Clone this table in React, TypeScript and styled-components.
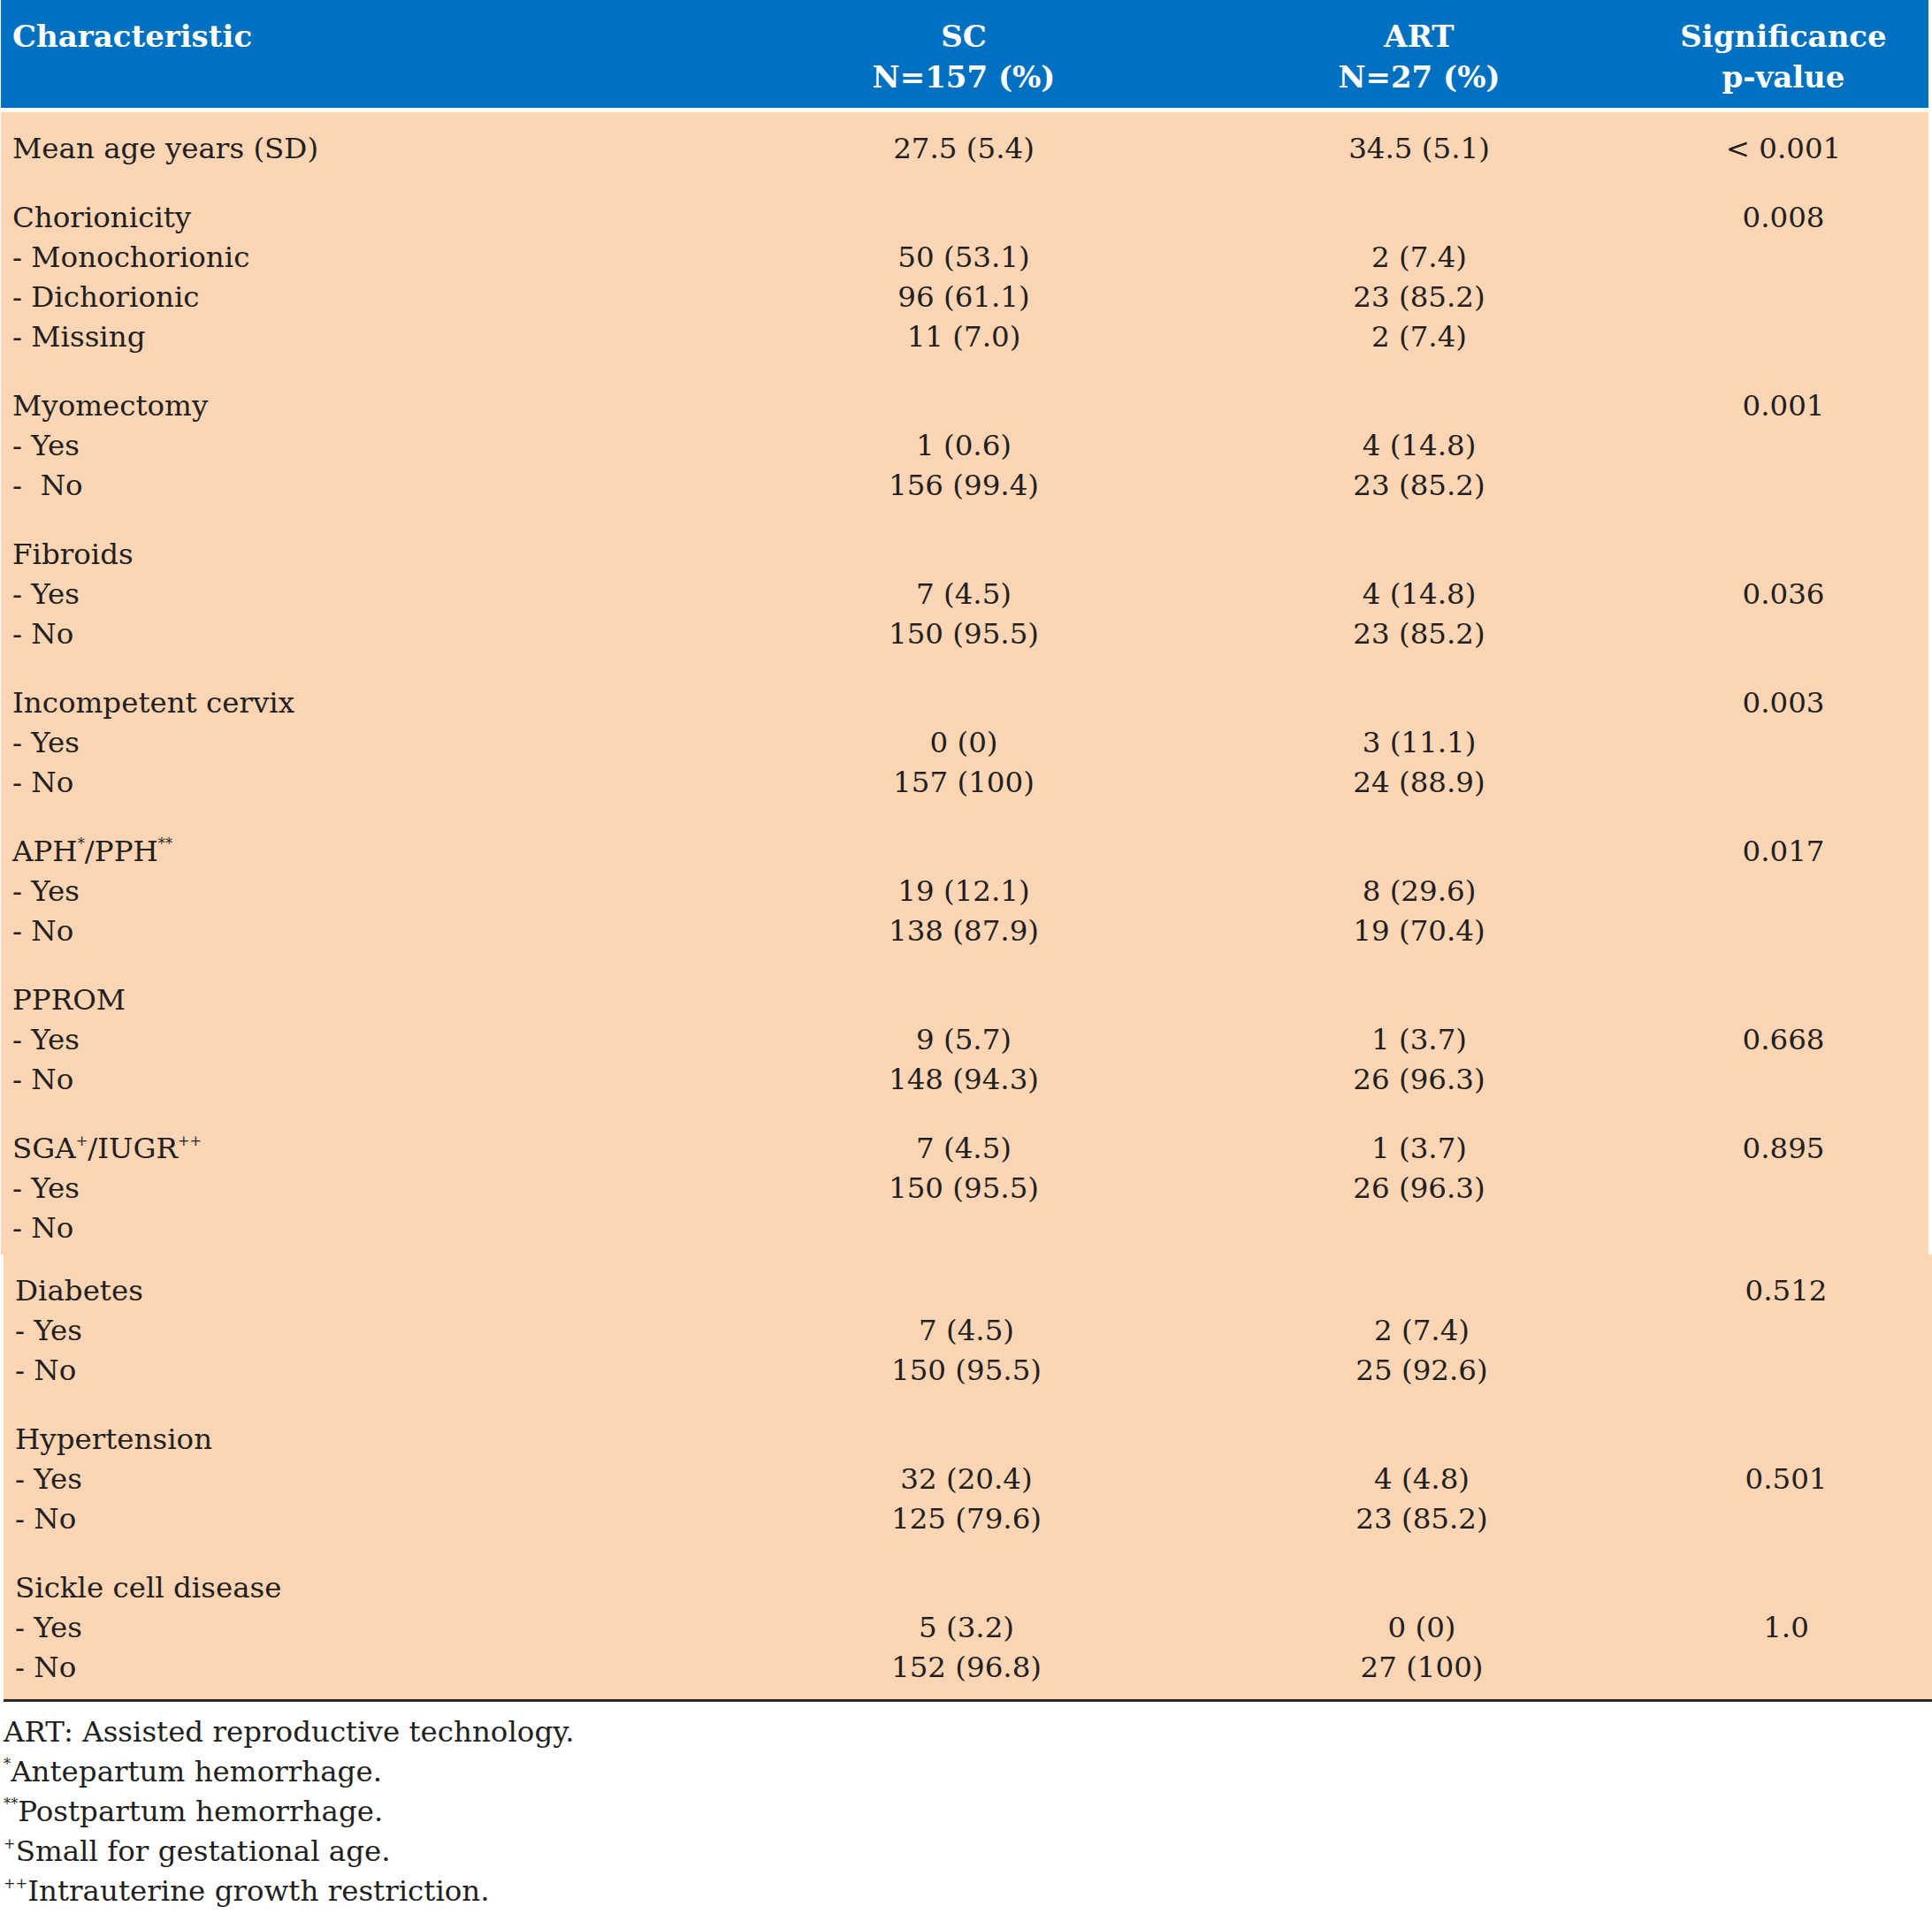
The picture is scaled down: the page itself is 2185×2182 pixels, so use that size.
import React from 'react';
import styled, { createGlobalStyle } from 'styled-components';

const GlobalStyle = createGlobalStyle`
  html, body {
    margin: 0;
    padding: 0;
    background: #ffffff;
    overflow: hidden;
  }
  body {
    font-family: "DejaVu Serif", "Liberation Serif", serif;
    color: #231f20;
  }
`;

const COLS = '821px 536px 494px 330px';

const Page = styled.div`
  width: 2185px;
  display: flex;
  flex-direction: column;
`;

const TableBlock = styled.div<{ $shift: number; $width: number }>`
  margin-left: ${(p) => p.$shift}px;
  width: ${(p) => p.$width}px;
  background: #fcd5b4;
`;

const HeaderRow = styled.div`
  display: grid;
  grid-template-columns: ${COLS};
  background: #0070c0;
  color: #ffffff;
  font-weight: bold;
  font-size: 34px;
  padding: 18px 0 12px;
  border-bottom: 5px solid #ffffff;
`;

const HeaderLine = styled.div`
  height: 46px;
  line-height: 46px;
  white-space: pre;
`;

const GroupRow = styled.div<{ $padBottom?: number }>`
  display: grid;
  grid-template-columns: ${COLS};
  padding: 19px 0 ${(p) => p.$padBottom ?? 14}px;
  font-size: 32.5px;
`;

const Cell = styled.div<{ $align: 'left' | 'center' }>`
  text-align: ${(p) => p.$align};
  padding-left: ${(p) => (p.$align === 'left' ? '13px' : '0')};
`;

const Line = styled.div`
  height: 45px;
  line-height: 45px;
  white-space: pre;
`;

const Sup = styled.sup`
  font-size: 0.5em;
  line-height: 0;
  vertical-align: 0.85em;
`;

const BottomRule = styled.div`
  height: 3px;
  background: #2a2a2a;
`;

const Notes = styled.div`
  margin: 12px 0 0 4px;
  font-size: 32.5px;
`;

type Group = {
  label: React.ReactNode[];
  sc: string[];
  art: string[];
  p: string[];
};

const upper: Group[] = [
  { label: ['Mean age years (SD)'], sc: ['27.5 (5.4)'], art: ['34.5 (5.1)'], p: ['< 0.001'] },
  {
    label: ['Chorionicity', '- Monochorionic', '- Dichorionic', '- Missing'],
    sc: ['', '50 (53.1)', '96 (61.1)', '11 (7.0)'],
    art: ['', '2 (7.4)', '23 (85.2)', '2 (7.4)'],
    p: ['0.008'],
  },
  {
    label: ['Myomectomy', '- Yes', '-  No'],
    sc: ['', '1 (0.6)', '156 (99.4)'],
    art: ['', '4 (14.8)', '23 (85.2)'],
    p: ['0.001'],
  },
  {
    label: ['Fibroids', '- Yes', '- No'],
    sc: ['', '7 (4.5)', '150 (95.5)'],
    art: ['', '4 (14.8)', '23 (85.2)'],
    p: ['', '0.036'],
  },
  {
    label: ['Incompetent cervix', '- Yes', '- No'],
    sc: ['', '0 (0)', '157 (100)'],
    art: ['', '3 (11.1)', '24 (88.9)'],
    p: ['0.003'],
  },
  {
    label: [
      <>
        APH<Sup>*</Sup>/PPH<Sup>**</Sup>
      </>,
      '- Yes',
      '- No',
    ],
    sc: ['', '19 (12.1)', '138 (87.9)'],
    art: ['', '8 (29.6)', '19 (70.4)'],
    p: ['0.017'],
  },
  {
    label: ['PPROM', '- Yes', '- No'],
    sc: ['', '9 (5.7)', '148 (94.3)'],
    art: ['', '1 (3.7)', '26 (96.3)'],
    p: ['', '0.668'],
  },
  {
    label: [
      <>
        SGA<Sup>+</Sup>/IUGR<Sup>++</Sup>
      </>,
      '- Yes',
      '- No',
    ],
    sc: ['7 (4.5)', '150 (95.5)'],
    art: ['1 (3.7)', '26 (96.3)'],
    p: ['0.895'],
  },
];

const lower: Group[] = [
  {
    label: ['Diabetes', '- Yes', '- No'],
    sc: ['', '7 (4.5)', '150 (95.5)'],
    art: ['', '2 (7.4)', '25 (92.6)'],
    p: ['0.512'],
  },
  {
    label: ['Hypertension', '- Yes', '- No'],
    sc: ['', '32 (20.4)', '125 (79.6)'],
    art: ['', '4 (4.8)', '23 (85.2)'],
    p: ['', '0.501'],
  },
  {
    label: ['Sickle cell disease', '- Yes', '- No'],
    sc: ['', '5 (3.2)', '152 (96.8)'],
    art: ['', '0 (0)', '27 (100)'],
    p: ['', '1.0'],
  },
];

const Lines = ({ items }: { items: React.ReactNode[] }) => (
  <>
    {items.map((t, i) => (
      <Line key={i}>{t === '' ? '\u00a0' : t}</Line>
    ))}
  </>
);

const GroupView = ({ g, padBottom }: { g: Group; padBottom?: number }) => (
  <GroupRow $padBottom={padBottom}>
    <Cell $align="left">
      <Lines items={g.label} />
    </Cell>
    <Cell $align="center">
      <Lines items={g.sc} />
    </Cell>
    <Cell $align="center">
      <Lines items={g.art} />
    </Cell>
    <Cell $align="center">
      <Lines items={g.p} />
    </Cell>
  </GroupRow>
);

const App: React.FC = () => {
  return (
    <Page>
      <GlobalStyle />
      <TableBlock $shift={1} $width={2180}>
        <HeaderRow>
          <Cell $align="left">
            <HeaderLine>Characteristic</HeaderLine>
          </Cell>
          <Cell $align="center">
            <HeaderLine>SC</HeaderLine>
            <HeaderLine>N=157 (%)</HeaderLine>
          </Cell>
          <Cell $align="center">
            <HeaderLine>ART</HeaderLine>
            <HeaderLine>N=27 (%)</HeaderLine>
          </Cell>
          <Cell $align="center">
            <HeaderLine>Significance</HeaderLine>
            <HeaderLine>p-value</HeaderLine>
          </Cell>
        </HeaderRow>
        {upper.map((g, i) => (
          <GroupView key={i} g={g} padBottom={i === upper.length - 1 ? 7 : undefined} />
        ))}
      </TableBlock>
      <TableBlock $shift={4} $width={2181}>
        {lower.map((g, i) => (
          <GroupView key={i} g={g} padBottom={i === lower.length - 1 ? 13 : undefined} />
        ))}
        <BottomRule />
      </TableBlock>
      <Notes>
        <Line>ART: Assisted reproductive technology.</Line>
        <Line>
          <Sup>*</Sup>Antepartum hemorrhage.
        </Line>
        <Line>
          <Sup>**</Sup>Postpartum hemorrhage.
        </Line>
        <Line>
          <Sup>+</Sup>Small for gestational age.
        </Line>
        <Line>
          <Sup>++</Sup>Intrauterine growth restriction.
        </Line>
      </Notes>
    </Page>
  );
};

export default App;
